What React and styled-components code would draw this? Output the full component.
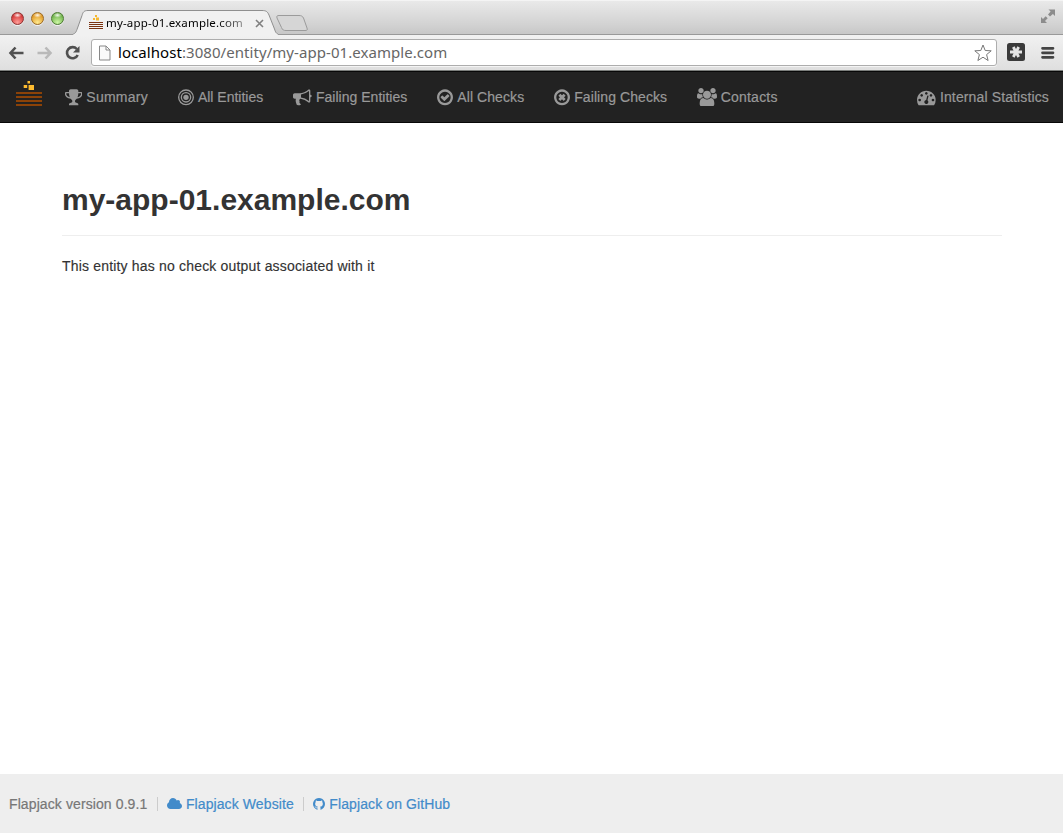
import React from "react";
import styled, { createGlobalStyle } from "styled-components";

const Global = createGlobalStyle`
  * { box-sizing: border-box; }
  body { margin: 0; background: #fff; font-family: "Liberation Sans", Arial, sans-serif; font-size: 14px; line-height: 20px; color: #333; }
  h1, p { margin: 0; }
  a { text-decoration: none; }
`;

const Window = styled.div`
  display: flex;
  flex-direction: column;
  width: 1063px;
  height: 833px;
  overflow: hidden;
`;

const TabStrip = styled.div`
  display: flex;
  align-items: flex-start;
  height: 35px;
  padding-left: 10px;
  background: linear-gradient(#e9e9e9, #d2d2d2 70%, #c6c6c6);
  border-top: 1px solid #f4f4f4;
  box-shadow: inset 0 -1px 0 #999;
`;

const Lights = styled.div`
  display: flex;
  gap: 7px;
  padding: 10.5px 0 0 0.5px;
  width: 63px;
`;

const Light = styled.span`
  width: 13px;
  height: 13px;
  border-radius: 50%;
  border: 1px solid ${(p) => p.$edge};
  background: radial-gradient(ellipse 4px 2.500px at 50% 20%, #fffe, #fff0), radial-gradient(circle at 50% 85%, ${(p) => p.$glow}, ${(p) => p.$tone} 65%);
  box-shadow: 0 1px 0 #f4f4f4;
`;

const Tab = styled.div`
  position: relative;
  display: flex;
  align-items: center;
  width: 205px;
  height: 34px;
  padding: 10px 0 0 16px;
`;

const TabShape = styled.svg`
  position: absolute;
  left: 0;
  top: 0;
`;

const Favicon = styled.svg`
  position: relative;
  margin-top: -3px;
`;

const TabTitle = styled.span`
  position: relative;
  width: 143px;
  margin-left: 3px;
  overflow: hidden;
  white-space: nowrap;
  font: 11.5px/16px "Noto Sans", sans-serif;
  letter-spacing: 0.18px;
  color: #000;
  mask-image: linear-gradient(90deg, #000 112px, #0006 138px);
`;

const TabClose = styled.svg`
  position: relative;
  margin-left: 5.5px;
`;

const NewTab = styled.svg`
  margin: 13px 0 0 -3px;
`;

const Expand = styled.svg`
  margin: 7px 7px 0 auto;
`;

const Toolbar = styled.div`
  display: flex;
  align-items: center;
  height: 36px;
  padding: 0 8px;
  background: linear-gradient(#f1f1f1, #dfdfdf);
  border-bottom: 1px solid #7b7e7c;
`;

const NavButtons = styled.div`
  display: flex;
  gap: 12px;
  width: 83px;
`;

const AddressBar = styled.div`
  display: flex;
  align-items: center;
  width: 906px;
  height: 27px;
  padding: 0 4px 0 6px;
  border: 1px solid #adadad;
  border-radius: 3px;
  background: #fff;
  box-shadow: 0 1px 0 #f4f4f4;
`;

const Url = styled.span`
  flex: 1;
  margin: -2px 0 0 7px;
  font: 15px/20px "Noto Sans", sans-serif;
  letter-spacing: 0.06px;
  color: #666;
  b { font-weight: 400; color: #000; }
`;

const Extension = styled.svg`
  margin: -1px 15px 0 10px;
`;

const Navbar = styled.nav`
  display: flex;
  align-items: center;
  height: 53px;
  margin-top: -1px;
  padding: 1px 14px 0 15px;
  background: #222;
  border-top: 1px solid #7b7e7c;
  border-bottom: 1px solid #080808;
  box-shadow: inset 0 1px 0 #080808;
`;

const Brand = styled.svg`
  margin: -7px 22px 0 0;
`;

const NavLink = styled.a`
  display: flex;
  align-items: center;
  gap: 4px;
  margin-right: ${(p) => p.$after ?? 30}px;
  margin-left: ${(p) => (p.$right ? "auto" : 0)};
  color: #999;
  white-space: nowrap;
  letter-spacing: ${(p) => p.$track || 0}px;
  -webkit-text-stroke: 0.2px;
`;

const Content = styled.main`
  flex: 1;
  width: 940px;
  margin: 0 0 0 62px;
  padding-top: 60px;
`;

const Title = styled.h1`
  font-size: 30px;
  line-height: 33px;
  font-weight: 700;
  padding-bottom: 19px;
  border-bottom: 1px solid #eee;
  margin-bottom: 20px;
`;

const Message = styled.p`
  color: #333;
  letter-spacing: 0.18px;
  -webkit-text-stroke: 0.15px;
`;

const Footer = styled.footer`
  display: flex;
  align-items: center;
  height: 59px;
  padding: 1px 0 0 9px;
  background: #eee;
  color: #777;
  letter-spacing: 0.1px;
  -webkit-text-stroke: 0.2px;
`;

const FooterLink = styled.a`
  display: flex;
  align-items: center;
  gap: 4px;
  color: #428bca;
`;

const Divider = styled.span`
  width: 1px;
  height: 14px;
  margin: 0 9px 0 9.5px;
  background: #ccc;
`;

const RING = "M1440 896q0-148-73-273t-198-198-273-73-273 73-198 198-73 273 73 273 198 198 273 73 273-73 198-198 73-273zm224 0q0 209-103 385.5t-279.5 279.5-385.5 103-385.5-103-279.5-279.5-103-385.5 103-385.5 279.5-279.5 385.5-103 385.5 103 279.5 279.5 103 385.5z";

const GLYPHS = {
  trophy: { x: 64, w: 1664, d: "M522 883q-74-162-74-371h-256v96q0 78 94.500 162t235.500 113zm1078-275v-96h-256q0 209-74 371 141-29 235.500-113t94.500-162zm128-128v128q0 71-41.500 143t-112 130-173 97.500-215.500 44.500q-42 54-95 95-38 34-52.500 72.500t-14.500 89.500q0 54 30.500 91t97.500 37q75 0 133.500 45.500t58.500 114.500v64q0 14-9 23t-23 9h-832q-14 0-23-9t-9-23v-64q0-69 58.500-114.500t133.500-45.500q67 0 97.500-37t30.500-91q0-51-14.500-89.500t-52.500-72.500q-53-41-95-95-113-5-215.500-44.500t-173-97.500-112-130-41.500-143v-128q0-40 28-68t68-28h288v-96q0-66 47-113t113-47h576q66 0 113 47t47 113v96h288q40 0 68 28t28 68z" },
  bullhorn: { x: 0, w: 1792, d: "M1664 640q53 0 90.500 37.500t37.500 90.500-37.500 90.500-90.500 37.500v384q0 52-38 90t-90 38q-417-347-812-380-58 19-91 66t-31 100.500 40 92.500q-20 33-23 65.500t6 58 33.500 55 48 50 61.500 50.500q-29 58-111.500 83t-168.500 11.500-132-55.500q-7-23-29.500-87.500t-32-94.500-23-89-15-101 3.500-98.500 22-110.500h-122q-66 0-113-47t-47-113v-192q0-66 47-113t113-47h480q435 0 896-384 52 0 90 38t38 90v384zm-128 604v-954q-394 302-768 343v270q377 42 768 341z" },
  check: { x: 128, w: 1536, d: "M1299 813l-422 422q-19 19-45 19t-45-19l-294-294q-19-19-19-45t19-45l102-102q19-19 45-19t45 19l147 147 275-275q19-19 45-19t45 19l102 102q19 19 19 45t-19 45z" + RING },
  times: { x: 128, w: 1536, d: "M1225 1079l-146 146q-10 10-23 10t-23-10l-137-137-137 137q-10 10-23 10t-23-10l-146-146q-10-10-10-23t10-23l137-137-137-137q-10-10-10-23t10-23l146-146q10-10 23-10t23 10l137 137 137-137q10-10 23-10t23 10l146 146q10 10 10 23t-10 23l-137 137 137 137q10 10 10 23t-10 23z" + RING },
  group: { x: 0, w: 1920, d: "M593 896q-162 5-265 128h-134q-82 0-138-40.500t-56-118.500q0-353 124-353 6 0 43.500 21t97.500 42.500 119 21.500q67 0 133-23-5 37-5 66 0 139 81 256zm1071 637q0 120-73 189.500t-194 69.500h-874q-121 0-194-69.500t-73-189.500q0-53 3.500-103.500t14-109 26.500-108.500 43-97.500 62-81 85.500-53.500 111.500-20q10 0 43 21.500t73 48 107 48 135 21.500 135-21.500 107-48 73-48 43-21.500q61 0 111.500 20t85.500 53.500 62 81 43 97.500 26.500 108.500 14 109 3.500 103.500zm-1024-1277q0 106-75 181t-181 75-181-75-75-181 75-181 181-75 181 75 75 181zm704 384q0 159-112.500 271.500t-271.500 112.500-271.500-112.500-112.500-271.500 112.500-271.500 271.500-112.500 271.500 112.500 112.500 271.500zm576 225q0 78-56 118.500t-138 40.500h-134q-103-123-265-128 81-117 81-256 0-29-5-66 66 23 133 23 59 0 119-21.500t97.500-42.500 43.500-21q124 0 124 353zm-128-609q0 106-75 181t-181 75-181-75-75-181 75-181 181-75 181 75 75 181z" },
  gauge: { x: 0, w: 1792, d: "M384 1152q0-53-37.500-90.500t-90.500-37.500-90.500 37.500-37.500 90.500 37.500 90.500 90.500 37.500 90.500-37.500 37.500-90.500zm192-448q0-53-37.500-90.500t-90.500-37.500-90.500 37.500-37.500 90.500 37.500 90.500 90.500 37.500 90.500-37.500 37.500-90.500zm428 481l101-382q6-26-7.500-48.500t-38.500-29.500-48 6.500-30 39.500l-101 382q-60 5-107 43.500t-63 98.500q-20 77 20 146t117 89 146-20 89-117q16-60-6-117t-72-91zm660-33q0-53-37.500-90.500t-90.500-37.500-90.500 37.500-37.500 90.500 37.500 90.500 90.500 37.500 90.500-37.500 37.500-90.500zm-640-640q0-53-37.500-90.500t-90.500-37.500-90.500 37.500-37.500 90.500 37.500 90.500 90.500 37.500 90.500-37.500 37.500-90.500zm448 192q0-53-37.500-90.500t-90.500-37.500-90.500 37.500-37.500 90.500 37.500 90.500 90.500 37.500 90.500-37.500 37.500-90.500zm320 448q0 261-141 483-19 29-54 29h-1402q-35 0-54-29-141-221-141-483 0-182 71-348t191-286 286-191 348-71 348 71 286 191 191 286 71 348z" },
  cloud: { x: 0, w: 1920, d: "M1920 1152q0 159-112.500 271.500t-271.500 112.500h-1088q-185 0-316.500-131.500t-131.500-316.500q0-132 71-241.500t187-163.500q-2-28-2-43 0-212 150-362t362-150q158 0 286.500 88t187.500 230q70-62 166-62 106 0 181 75t75 181q0 75-41 138 129 30 213 134.500t84 239.500z" },
  github: { x: 128, w: 1536, d: "M896 128q209 0 385.500 103t279.500 279.500 103 385.500q0 251-146.500 451.500t-378.500 277.500q-27 5-40-7t-13-30q0-3 .5-76.500t.5-134.500q0-97-52-142 57-6 102.500-18t94-39 81-66.500 53-105 20.500-150.500q0-119-79-206 37-91-8-204-28-9-81 11t-92 44l-38 24q-93-26-192-26t-192 26q-16-11-42.500-27t-83.500-38.500-85-13.500q-45 113-8 204-79 87-79 206 0 85 20.500 150t52.500 105 80.500 67 94 39 102.500 18q-39 36-49 103-21 10-45 15t-57 5-65.500-21.500-55.500-62.500q-19-32-48.500-52t-49.500-24l-20-3q-21 0-29 4.500t-5 11.500 9 14 13 12l7 5q22 10 43.500 38t31.500 51l10 23q13 38 44 61.500t67 30 69.500 7 55.500-3.500l23-4q0 38 .5 88.500t.5 54.500q0 18-13 30t-40 7q-232-77-378.500-277.500t-146.500-451.500q0-209 103-385.500t279.500-279.500 385.500-103z" },
};

function Glyph({ name, em = 18.67 }) {
  if (name === "bullseye") {
    return (
      <svg width={(em * 1536) / 1792} height={em} viewBox="128 0 1536 1792" fill="none" stroke="currentColor">
        <circle cx="896" cy="896" r="256" fill="currentColor" stroke="none" />
        <circle cx="896" cy="896" r="448" strokeWidth="128" />
        <circle cx="896" cy="896" r="704" strokeWidth="128" />
      </svg>
    );
  }
  const g = GLYPHS[name];
  return (
    <svg width={(em * g.w) / 1792} height={em} viewBox={`${g.x} 0 ${g.w} 1792`} fill="currentColor">
      <path d={g.d} />
    </svg>
  );
}

export default function App() {
  return (
    <Window>
      <Global />
      <TabStrip>
        <Lights>
          <Light $edge="#8d3433" $tone="#d8403f" $glow="#ff9d98" />
          <Light $edge="#9a6a26" $tone="#e3a02f" $glow="#ffea8f" />
          <Light $edge="#4c7a33" $tone="#78b854" $glow="#ccf7a4" />
        </Lights>
        <Tab>
          <TabShape width="205" height="34" viewBox="0 0 205 34">
            <path d="M-2 33.500C2.500 33 3 31 4 28.500L9 14.500C10 11 11 9.500 15 9.500H189C193 9.500 194.500 10.500 196 14L201.500 28C202.500 31 203 33 207 33.500V35H-2Z" fill="#f1f1f1" stroke="#8f8f8f" />
          </TabShape>
          <Favicon width="14" height="15" viewBox="0 0 14 15">
            <path d="M0 8.500h14M0 10.500h14M0 12.500h14M0 14.500h14" stroke="#7a3310" />
            <path d="M6 1h2v2H6zM4 4h2v2H4zM7 3.500h3v3H7z" fill="#f5b82e" />
          </Favicon>
          <TabTitle>my-app-01.example.com</TabTitle>
          <TabClose width="9" height="9" viewBox="0 0 9 9"><path d="M1 1l7 7M8 1l-7 7" stroke="#808080" strokeWidth="1.600" /></TabClose>
        </Tab>
        <NewTab width="34" height="18" viewBox="0 0 34 18">
          <path d="M4 1.500H24C26 1.500 27.500 2 28.500 4L32 14C32.500 16 32.500 16.500 30 16.500H11C8.500 16.500 7.500 16 6.500 13.500L2 4C1.500 2 2 1.500 4 1.500Z" fill="#d6d6d6" stroke="#9b9b9b" />
        </NewTab>
        <Expand width="16" height="16" viewBox="0 0 16 16">
          <path d="M8.500 1.500h6.500v6.500l-2.100-2.100-2.900 2.700-2-2L10.600 3.600zM1 15V9l2 2 2.700-2.700 2 2L5 13l2 2z" fill="#8c8c8c" />
        </Expand>
      </TabStrip>
      <Toolbar>
        <NavButtons>
          <svg width="16" height="16" viewBox="0 0 16 16" fill="none" stroke="#505050" strokeWidth="2.600"><path d="M7.500 2.500L2.500 8l5 5.500M3 8h12.500" /></svg>
          <svg width="17" height="16" viewBox="0 0 17 16" fill="none" stroke="#b9b9b9" strokeWidth="2.600"><path d="M9.500 2.500l5 5.500-5 5.500M14 8H1.500" /></svg>
          <svg width="16" height="16" viewBox="0 0 16 16"><path d="M11.800 4A5.600 5.600 0 1 0 12.700 10" fill="none" stroke="#505050" strokeWidth="2.600" /><path d="M14.500 1v6.500H8z" fill="#505050" /></svg>
        </NavButtons>
        <AddressBar>
          <svg width="13" height="16" viewBox="0 0 13 16"><path d="M1.500 1h6.500l4 4v10h-10.500zM8 1v4h4" fill="#fafafa" stroke="#888" /></svg>
          <Url><b>localhost</b>:3080/entity/my-app-01.example.com</Url>
          <svg width="19" height="18" viewBox="0 0 19 18"><path d="M10 1l2.200 5.500 6 .3-4.600 3.800 1.500 5.900L10 13.200l-5.100 3.300 1.500-5.900L1.800 6.800l6-.3z" fill="#fff" stroke="#777" strokeLinejoin="round" /></svg>
        </AddressBar>
        <Extension width="18" height="18" viewBox="0 0 18 18">
          <rect width="18" height="18" rx="2.500" fill="#3a3a3a" />
          <path d="M3 9h12M6.300 4l5.400 10M11.700 4l-5.400 10" stroke="#e4e4e4" strokeWidth="2.800" />
        </Extension>
        <svg width="15" height="14" viewBox="0 0 15 14"><path d="M2.500 2.300h10.500M2.500 6.800h10.500M2.500 11.300h10.500" stroke="#444" strokeWidth="2.700" strokeLinecap="round" /></svg>
      </Toolbar>
      <Navbar>
        <Brand width="28" height="27" viewBox="0 0 28 27">
          <path d="M1 13h26M1 17h26M1 21h26M1 25h26" stroke="#8b4208" strokeWidth="2" />
          <path d="M12.500 1h2.500v2.500h-2.500zM8.700 5h3.500v3H8.700zM13.600 5h5.400v5h-5.400z" fill="#fdbb30" />
        </Brand>
        <NavLink $track={0.24}><Glyph name="trophy" />Summary</NavLink>
        <NavLink><Glyph name="bullseye" />All Entities</NavLink>
        <NavLink $track={0.02}><Glyph name="bullhorn" />Failing Entities</NavLink>
        <NavLink $track={0.08}><Glyph name="check" />All Checks</NavLink>
        <NavLink $track={0.08} $after={29.5}><Glyph name="times" />Failing Checks</NavLink>
        <NavLink $track={0.22}><Glyph name="group" />Contacts</NavLink>
        <NavLink $right $after={0} $track={0.13}><Glyph name="gauge" />Internal Statistics</NavLink>
      </Navbar>
      <Content>
        <Title>my-app-01.example.com</Title>
        <Message>This entity has no check output associated with it</Message>
      </Content>
      <Footer>
        <span>Flapjack version 0.9.1</span>
        <Divider />
        <FooterLink><Glyph name="cloud" em={14} />Flapjack Website</FooterLink>
        <Divider />
        <FooterLink><Glyph name="github" em={14} />Flapjack on GitHub</FooterLink>
      </Footer>
    </Window>
  );
}
